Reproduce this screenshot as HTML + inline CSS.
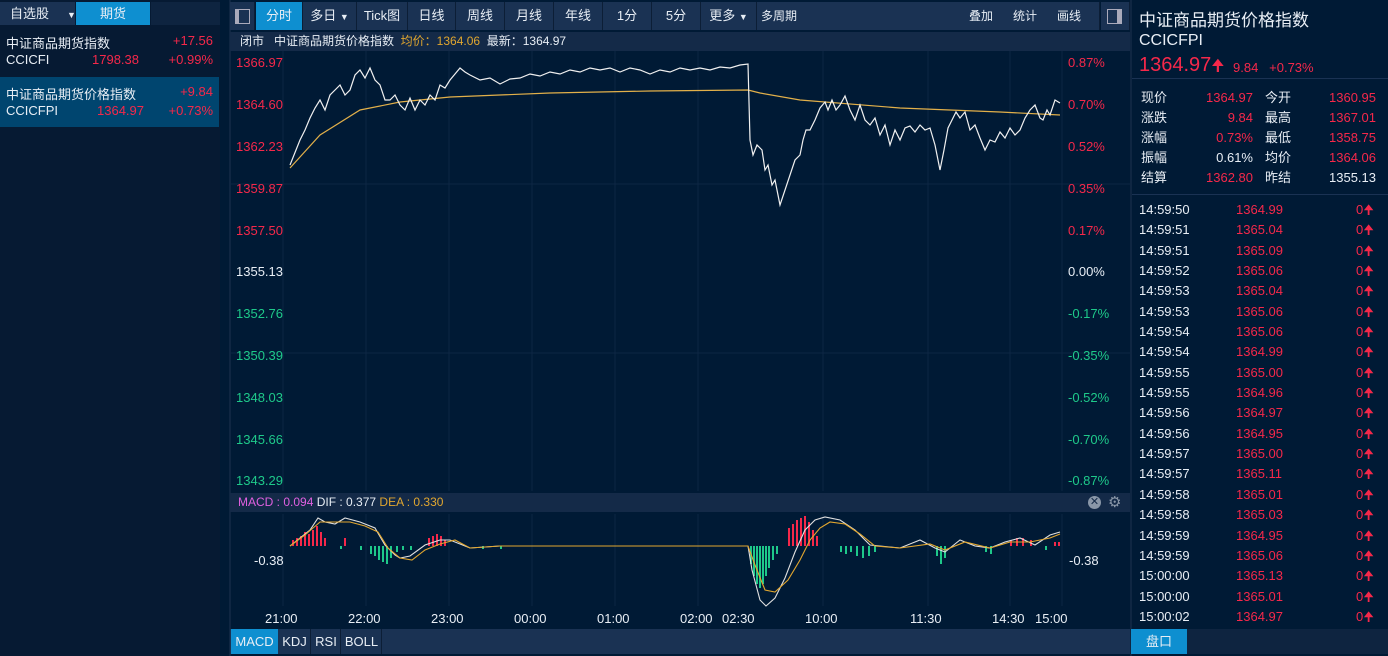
<!DOCTYPE html><html><head><meta charset="utf-8"><style>
*{margin:0;padding:0;box-sizing:border-box}
body{width:1388px;height:656px;background:#001a35;font-family:"Liberation Sans","Noto Sans CJK SC",sans-serif;font-size:13px;color:#e8eef5;position:relative;overflow:hidden}
.a{position:absolute;white-space:nowrap}
.r{color:#f5284a}.g{color:#1ec98a}.y{color:#e2a72f}
.tb{position:absolute;top:2px;height:28px;background:#1a3253;line-height:28px;text-align:center;font-size:13px;border-right:1px solid #0c1e36}
.num{text-align:right}
</style></head><body>
<div class="a" style="left:0;top:0;width:220px;height:656px;background:#061a33"></div>
<div class="a" style="left:0;top:2px;width:75px;height:23px;background:#1a3253;line-height:23px;padding-left:10px">自选股<span style="font-size:9px;margin-left:18px">▼</span></div>
<div class="a" style="left:76px;top:2px;width:74px;height:23px;background:#0e8fd0;line-height:23px;text-align:center">期货</div>
<div class="a" style="left:151px;top:2px;width:69px;height:23px;background:#0e2440"></div>
<div class="a" style="left:6px;top:33px">中证商品期货指数</div><div class="a r" style="right:1175px;top:33px">+17.56</div>
<div class="a" style="left:6px;top:52px">CCICFI</div><div class="a r" style="left:92px;top:52px">1798.38</div><div class="a r" style="right:1175px;top:52px">+0.99%</div>
<div class="a" style="left:0;top:77px;width:219px;height:50px;background:#00456f"></div>
<div class="a" style="left:6px;top:84px">中证商品期货价格指数</div><div class="a r" style="right:1175px;top:84px">+9.84</div>
<div class="a" style="left:6px;top:103px">CCICFPI</div><div class="a r" style="left:97px;top:103px">1364.97</div><div class="a r" style="right:1175px;top:103px">+0.73%</div>
<div class="a" style="left:229px;top:0;width:2px;height:656px;background:#0f2642"></div>
<div class="tb" style="left:230px;width:25px"><div style="position:absolute;left:5px;top:7px;width:15px;height:15px;border:1px solid #aab;"><div style="width:3px;height:13px;background:#aab"></div></div></div>
<div class="tb" style="left:256px;width:47px;background:#0e8fd0">分时</div>
<div class="tb" style="left:303px;width:54px">多日 <span style="font-size:9px">▼</span></div>
<div class="tb" style="left:357px;width:51px">Tick图</div>
<div class="tb" style="left:408px;width:48px">日线</div>
<div class="tb" style="left:456px;width:49px">周线</div>
<div class="tb" style="left:505px;width:49px">月线</div>
<div class="tb" style="left:554px;width:49px">年线</div>
<div class="tb" style="left:603px;width:49px">1分</div>
<div class="tb" style="left:652px;width:49px">5分</div>
<div class="tb" style="left:701px;width:56px">更多 <span style="font-size:9px">▼</span></div>
<div class="tb" style="left:757px;width:343px;text-align:left;padding-left:4px;font-size:12px">多周期<span style="position:absolute;left:212px">叠加</span><span style="position:absolute;left:256px">统计</span><span style="position:absolute;left:300px">画线</span></div>
<div class="tb" style="left:1101px;width:29px"><div style="position:absolute;left:6px;top:7px;width:15px;height:15px;border:1px solid #aab;"><div style="margin-left:9px;width:4px;height:13px;background:#aab"></div></div></div>
<div class="a" style="left:230px;top:32px;width:900px;height:19px;background:#142a48;line-height:19px;padding-left:10px;font-size:12px">闭市 &nbsp;&nbsp;中证商品期货价格指数 &nbsp;<span class="y">均价：1364.06</span> &nbsp;最新：1364.97</div>
<svg class="a" style="left:230px;top:51px" width="900" height="578">
<g stroke="#0d2644" stroke-width="1">
<line x1="53" y1="0" x2="53" y2="440"/><line x1="136" y1="0" x2="136" y2="440"/><line x1="219" y1="0" x2="219" y2="440"/><line x1="302" y1="0" x2="302" y2="440"/><line x1="385" y1="0" x2="385" y2="440"/><line x1="468" y1="0" x2="468" y2="440"/><line x1="593" y1="0" x2="593" y2="440"/><line x1="698" y1="0" x2="698" y2="440"/><line x1="780" y1="0" x2="780" y2="440"/><line x1="832" y1="0" x2="832" y2="440"/>
<line x1="53" y1="463" x2="53" y2="555"/><line x1="136" y1="463" x2="136" y2="555"/><line x1="219" y1="463" x2="219" y2="555"/><line x1="302" y1="463" x2="302" y2="555"/><line x1="385" y1="463" x2="385" y2="555"/><line x1="468" y1="463" x2="468" y2="555"/><line x1="593" y1="463" x2="593" y2="555"/><line x1="698" y1="463" x2="698" y2="555"/><line x1="780" y1="463" x2="780" y2="555"/><line x1="832" y1="463" x2="832" y2="555"/>
<line x1="0" y1="133" x2="900" y2="133"/><line x1="0" y1="302" x2="900" y2="302"/>
</g>
<g transform="translate(-230,-51)">
<polyline fill="none" stroke="#e2b04a" stroke-width="1.2" points="290,168 320,135 360,110 400,102 450,97 550,93 650,91 748,90 760,93 800,100 900,108 1000,112 1060,115"/>
<polyline fill="none" stroke="#f0f0f0" stroke-width="1.2" points="290,165 296,150 300,140 305,130 310,118 315,108 320,100 325,110 330,95 335,90 340,85 345,95 350,90 355,75 360,70 365,78 370,68 375,80 380,85 385,100 390,100 395,95 400,105 405,110 410,98 415,110 420,100 425,105 430,95 435,100 440,85 445,88 450,80 455,74 460,68 465,72 470,75 480,80 490,78 500,84 510,79 520,78 530,74 540,76 550,72 560,74 570,70 580,72 590,68 600,70 610,68 620,72 630,68 640,70 650,74 660,70 670,72 680,68 690,70 700,68 710,70 720,67 730,68 740,65 748,64 750,140 753,155 757,145 762,150 765,170 768,165 772,185 775,180 780,205 785,190 790,175 795,160 800,155 803,140 806,130 810,130 815,120 820,108 825,102 828,110 832,100 836,110 840,105 845,96 850,110 855,120 860,105 865,120 870,125 875,118 880,135 885,125 890,145 895,130 900,140 905,128 910,126 915,132 920,125 925,130 930,128 935,145 940,170 944,150 948,128 952,120 956,112 960,118 965,112 970,130 975,125 980,138 985,150 990,140 995,142 1000,132 1005,138 1010,128 1015,135 1020,130 1025,118 1030,110 1035,105 1040,118 1043,120 1047,110 1050,115 1055,100 1060,103"/>
</g>
<g transform="translate(-230,-51)">
<g fill="#f5284a">
<rect x="292" y="540" width="2" height="6"/><rect x="296" y="538" width="2" height="8"/><rect x="300" y="536" width="2" height="10"/><rect x="304" y="532" width="2" height="14"/><rect x="308" y="534" width="2" height="12"/><rect x="312" y="530" width="2" height="16"/><rect x="316" y="526" width="2" height="20"/><rect x="320" y="532" width="2" height="14"/><rect x="324" y="538" width="2" height="8"/><rect x="344" y="538" width="2" height="8"/>
<rect x="428" y="538" width="2" height="8"/><rect x="432" y="536" width="2" height="10"/><rect x="436" y="534" width="2" height="12"/><rect x="440" y="536" width="2" height="10"/><rect x="444" y="540" width="2" height="6"/>
<rect x="788" y="528" width="2" height="18"/><rect x="792" y="524" width="2" height="22"/><rect x="796" y="520" width="2" height="26"/><rect x="800" y="518" width="2" height="28"/><rect x="804" y="516" width="2" height="30"/><rect x="808" y="522" width="2" height="24"/><rect x="812" y="530" width="2" height="16"/><rect x="816" y="536" width="2" height="10"/>
<rect x="1010" y="540" width="2" height="6"/><rect x="1016" y="538" width="2" height="8"/><rect x="1022" y="538" width="2" height="8"/><rect x="1030" y="540" width="2" height="6"/><rect x="1054" y="542" width="2" height="4"/><rect x="1058" y="542" width="2" height="4"/>
</g>
<g fill="#1ec98a">
<rect x="340" y="546" width="2" height="3"/><rect x="360" y="546" width="2" height="4"/><rect x="370" y="546" width="2" height="8"/><rect x="374" y="546" width="2" height="10"/><rect x="378" y="546" width="2" height="14"/><rect x="382" y="546" width="2" height="16"/><rect x="386" y="546" width="2" height="18"/><rect x="390" y="546" width="2" height="12"/><rect x="396" y="546" width="2" height="6"/><rect x="402" y="546" width="2" height="4"/><rect x="410" y="546" width="2" height="4"/>
<rect x="482" y="546" width="2" height="3"/><rect x="500" y="546" width="2" height="3"/>
<rect x="750" y="546" width="2" height="18"/><rect x="753" y="546" width="2" height="30"/><rect x="756" y="546" width="2" height="38"/><rect x="759" y="546" width="2" height="42"/><rect x="762" y="546" width="2" height="38"/><rect x="765" y="546" width="2" height="30"/><rect x="768" y="546" width="2" height="22"/><rect x="772" y="546" width="2" height="14"/><rect x="776" y="546" width="2" height="8"/>
<rect x="840" y="546" width="2" height="6"/><rect x="845" y="546" width="2" height="8"/><rect x="850" y="546" width="2" height="6"/><rect x="856" y="546" width="2" height="10"/><rect x="862" y="546" width="2" height="12"/><rect x="868" y="546" width="2" height="10"/><rect x="874" y="546" width="2" height="6"/>
<rect x="936" y="546" width="2" height="10"/><rect x="940" y="546" width="2" height="18"/><rect x="944" y="546" width="2" height="12"/><rect x="985" y="546" width="2" height="6"/><rect x="990" y="546" width="2" height="8"/><rect x="1045" y="546" width="2" height="4"/>
</g>
<polyline fill="none" stroke="#e0e0e0" stroke-width="1.1" points="290,546 300,538 310,530 318,518 325,522 335,524 345,518 360,522 375,528 385,545 395,555 400,558 410,556 425,545 440,540 450,540 470,548 500,546 600,546 700,546 748,546 752,570 760,600 766,606 775,598 785,578 795,552 805,530 815,520 825,517 840,520 855,530 870,545 900,548 920,540 935,548 945,552 960,540 975,546 990,548 1005,542 1020,538 1035,545 1050,535 1060,532"/>
<polyline fill="none" stroke="#e2a72f" stroke-width="1.1" points="290,546 305,535 320,522 335,522 350,522 365,526 378,532 388,548 400,558 412,560 425,550 440,544 455,540 470,548 500,546 700,546 748,546 755,565 765,590 775,592 788,580 800,560 810,540 820,528 830,522 845,524 860,534 875,546 900,548 930,544 945,550 965,542 990,548 1010,542 1030,542 1050,538 1060,534"/>
</g>
</svg>
<div class="a r" style="left:236px;top:55px">1366.97</div><div class="a r" style="left:1068px;top:55px">0.87%</div>
<div class="a r" style="left:236px;top:97px">1364.60</div><div class="a r" style="left:1068px;top:97px">0.70%</div>
<div class="a r" style="left:236px;top:139px">1362.23</div><div class="a r" style="left:1068px;top:139px">0.52%</div>
<div class="a r" style="left:236px;top:181px">1359.87</div><div class="a r" style="left:1068px;top:181px">0.35%</div>
<div class="a r" style="left:236px;top:223px">1357.50</div><div class="a r" style="left:1068px;top:223px">0.17%</div>
<div class="a" style="left:236px;top:264px">1355.13</div><div class="a" style="left:1068px;top:264px">0.00%</div>
<div class="a g" style="left:236px;top:306px">1352.76</div><div class="a g" style="left:1068px;top:306px">-0.17%</div>
<div class="a g" style="left:236px;top:348px">1350.39</div><div class="a g" style="left:1068px;top:348px">-0.35%</div>
<div class="a g" style="left:236px;top:390px">1348.03</div><div class="a g" style="left:1068px;top:390px">-0.52%</div>
<div class="a g" style="left:236px;top:432px">1345.66</div><div class="a g" style="left:1068px;top:432px">-0.70%</div>
<div class="a g" style="left:236px;top:473px">1343.29</div><div class="a g" style="left:1068px;top:473px">-0.87%</div>
<div class="a" style="left:230px;top:493px;width:900px;height:19px;background:#142a48;line-height:19px;padding-left:8px;font-size:12px"><span style="color:#e060e0">MACD : 0.094</span> DIF : 0.377 <span class="y">DEA : 0.330</span>
<span style="position:absolute;left:858px;top:3px;width:13px;height:13px;border-radius:50%;background:#8a97a8;color:#142a48;font-size:11px;line-height:13px;text-align:center">✕</span><span style="position:absolute;left:878px;top:0;color:#8a97a8;font-size:15px">⚙</span></div>
<div class="a" style="left:254px;top:553px">-0.38</div><div class="a" style="left:1069px;top:553px">-0.38</div>
<div class="a" style="left:265px;top:611px">21:00</div><div class="a" style="left:348px;top:611px">22:00</div><div class="a" style="left:431px;top:611px">23:00</div><div class="a" style="left:514px;top:611px">00:00</div><div class="a" style="left:597px;top:611px">01:00</div><div class="a" style="left:680px;top:611px">02:00</div><div class="a" style="left:722px;top:611px">02:30</div><div class="a" style="left:805px;top:611px">10:00</div><div class="a" style="left:910px;top:611px">11:30</div><div class="a" style="left:992px;top:611px">14:30</div><div class="a" style="left:1035px;top:611px">15:00</div>
<div class="a" style="left:230px;top:629px;width:900px;height:25px;background:#1a3253"></div>
<div class="a" style="left:231px;top:629px;width:47px;height:25px;background:#0e8fd0;line-height:25px;text-align:center">MACD</div>
<div class="a" style="left:279px;top:629px;width:32px;height:25px;line-height:25px;text-align:center;border-right:1px solid #0c1e36">KDJ</div>
<div class="a" style="left:312px;top:629px;width:29px;height:25px;line-height:25px;text-align:center;border-right:1px solid #0c1e36">RSI</div>
<div class="a" style="left:342px;top:629px;width:40px;height:25px;line-height:25px;text-align:center;border-right:1px solid #0c1e36">BOLL</div>
<div class="a" style="left:1130px;top:0;width:2px;height:656px;background:#0f2642"></div>
<div class="a" style="left:1139px;top:6px;font-size:17px">中证商品期货价格指数</div>
<div class="a" style="left:1139px;top:32px;font-size:16px">CCICFPI</div>
<div class="a r" style="left:1139px;top:54px;font-size:20px">1364.97<span style="font-size:16px">🠉</span></div>
<div class="a r" style="left:1233px;top:60px">9.84 &nbsp;&nbsp;+0.73%</div>
<div class="a" style="left:1132px;top:78px;width:256px;height:1px;background:#1a3253"></div>
<div class="a" style="left:1141px;top:88px;line-height:20px">现价<br>涨跌<br>涨幅<br>振幅<br>结算</div>
<div class="a num" style="left:1190px;width:63px;top:88px;line-height:20px"><span class="r">1364.97</span><br><span class="r">9.84</span><br><span class="r">0.73%</span><br>0.61%<br><span class="r">1362.80</span></div>
<div class="a" style="left:1265px;top:88px;line-height:20px">今开<br>最高<br>最低<br>均价<br>昨结</div>
<div class="a num r" style="left:1310px;width:66px;top:88px;line-height:20px">1360.95<br>1367.01<br>1358.75<br>1364.06<br><span style="color:#e8eef5">1355.13</span></div>
<div class="a" style="left:1132px;top:194px;width:256px;height:1px;background:#1a3253"></div>
<div class="a" style="left:1139px;top:200px;line-height:20.35px">14:59:50<br>14:59:51<br>14:59:51<br>14:59:52<br>14:59:53<br>14:59:53<br>14:59:54<br>14:59:54<br>14:59:55<br>14:59:55<br>14:59:56<br>14:59:56<br>14:59:57<br>14:59:57<br>14:59:58<br>14:59:58<br>14:59:59<br>14:59:59<br>15:00:00<br>15:00:00<br>15:00:02</div>
<div class="a r" style="left:1236px;top:200px;line-height:20.35px">1364.99<br>1365.04<br>1365.09<br>1365.06<br>1365.04<br>1365.06<br>1365.06<br>1364.99<br>1365.00<br>1364.96<br>1364.97<br>1364.95<br>1365.00<br>1365.11<br>1365.01<br>1365.03<br>1364.95<br>1365.06<br>1365.13<br>1365.01<br>1364.97</div>
<div class="a r" style="left:1356px;top:200px;line-height:20.35px">0🠉<br>0🠉<br>0🠉<br>0🠉<br>0🠉<br>0🠉<br>0🠉<br>0🠉<br>0🠉<br>0🠉<br>0🠉<br>0🠉<br>0🠉<br>0🠉<br>0🠉<br>0🠉<br>0🠉<br>0🠉<br>0🠉<br>0🠉<br>0🠉</div>
<div class="a" style="left:1132px;top:629px;width:256px;height:25px;background:#0e2440"></div>
<div class="a" style="left:1131px;top:629px;width:56px;height:25px;background:#0e8fd0;line-height:25px;text-align:center">盘口</div>
</body></html>
